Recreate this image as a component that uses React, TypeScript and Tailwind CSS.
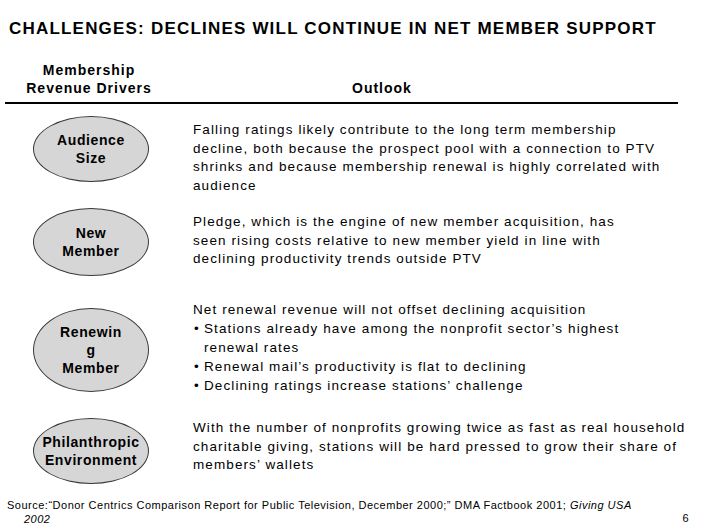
import React from "react";

const body = "text-[13.5px] leading-[18.5px] tracking-[1.1px] text-black whitespace-nowrap";

function Ellipse({ lines, h }: { lines: string[]; h: string }) {
  return (
    <div
      className={`ml-[33px] w-[116px] ${h} rounded-[50%] bg-[#d6d6d6] border border-[#3a3a3a] flex flex-col items-center justify-center text-[14px] leading-[18px] font-bold tracking-[0.6px] text-black text-center`}
    >
      {lines.map((l, i) => (
        <span key={i}>{l}</span>
      ))}
    </div>
  );
}

function Bullet({ children }: { children: React.ReactNode }) {
  return (
    <div className="flex">
      <span className="w-[11px] pl-[1px]">•</span>
      <span>{children}</span>
    </div>
  );
}

export default function App() {
  return (
    <div
      className="w-[706px] h-[529px] overflow-hidden bg-white relative"
      style={{ fontFamily: '"Liberation Sans", Arial, sans-serif' }}
    >
      <div className="pt-[19px] pl-[9px] text-[17px] leading-[20px] font-bold tracking-[1.2px] text-black whitespace-nowrap">
        CHALLENGES: DECLINES WILL CONTINUE IN NET MEMBER SUPPORT
      </div>

      <div className="mt-[22px] flex items-end text-[14px] leading-[18px] font-bold tracking-[1px] text-black">
        <div className="w-[178px] text-center">
          <div>Membership</div>
          <div>Revenue Drivers</div>
        </div>
        <div className="ml-[174px]">Outlook</div>
      </div>
      <div className="mt-[5px] ml-[5px] w-[673px] h-[2px] bg-black" />

      {/* Row 1 */}
      <div className="mt-[12px] h-[92px] flex items-start">
        <div className="w-[193px]">
          <Ellipse lines={["Audience", "Size"]} h="h-[66px]" />
        </div>
        <div className={`${body} mt-[5px]`}>
          <div>Falling ratings likely contribute to the long term membership</div>
          <div>decline, both because the prospect pool with a connection to PTV</div>
          <div>shrinks and because membership renewal is highly correlated with</div>
          <div>audience</div>
        </div>
      </div>

      {/* Row 2 */}
      <div className="h-[93px] flex items-start">
        <div className="w-[193px]">
          <Ellipse lines={["New", "Member"]} h="h-[68px]" />
        </div>
        <div className={`${body} mt-[5px]`}>
          <div>Pledge, which is the engine of new member acquisition, has</div>
          <div>seen rising costs relative to new member yield in line with</div>
          <div>declining productivity trends outside PTV</div>
        </div>
      </div>

      {/* Row 3 */}
      <div className="h-[117px] flex items-start">
        <div className="w-[193px] pt-[7px]">
          <Ellipse lines={["Renewin", "g", "Member"]} h="h-[84px]" />
        </div>
        <div className={`${body} leading-[19px] -mt-[1px]`}>
          <div>Net renewal revenue will not offset declining acquisition</div>
          <Bullet>Stations already have among the nonprofit sector’s highest</Bullet>
          <div className="pl-[11px]">renewal rates</div>
          <Bullet>Renewal mail’s productivity is flat to declining</Bullet>
          <Bullet>Declining ratings increase stations’ challenge</Bullet>
        </div>
      </div>

      {/* Row 4 */}
      <div className="h-[80px] flex items-start">
        <div className="w-[193px]">
          <Ellipse lines={["Philanthropic", "Environment"]} h="h-[66px]" />
        </div>
        <div className={`${body} mt-[1px]`}>
          <div>With the number of nonprofits growing twice as fast as real household</div>
          <div>charitable giving, stations will be hard pressed to grow their share of</div>
          <div>members’ wallets</div>
        </div>
      </div>

      {/* Footer */}
      <div className="flex items-end pl-[7px] pr-[17px] text-[11px] leading-[14px] tracking-[0.5px] text-black">
        <div className="flex-1 whitespace-nowrap">
          <div>
            Source:“Donor Centrics Comparison Report for Public Television, December 2000;” DMA Factbook 2001;{" "}
            <i>Giving USA</i>
          </div>
          <div className="pl-[17px] italic">2002</div>
        </div>
        <div className="mb-[1px]">6</div>
      </div>
    </div>
  );
}
